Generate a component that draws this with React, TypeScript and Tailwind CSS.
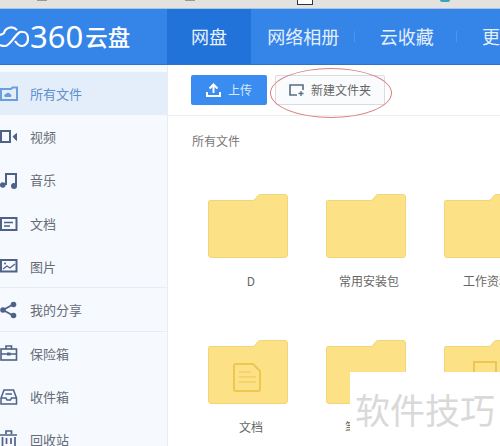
import React from "react";

const font = { fontFamily: '"Noto Sans CJK SC", sans-serif' };

function Icon({ children }: { children: React.ReactNode }) {
  return (
    <svg width="20" height="20" viewBox="0 0 20 20" className="shrink-0 text-[#4e6288]" fill="none" stroke="currentColor" strokeWidth="2">
      {children}
    </svg>
  );
}

const menu = [
  {
    label: "所有文件",
    active: true,
    icon: (
      <>
        <path d="M1 5h10l1.500-1.500H17V16H1z" stroke="#6a9fdc" />
        <path d="M5 13c-1.500-1-.5-3 1-3 1-2 3.500-1.500 4 0 1.500 0 2 2 .8 3z" fill="#6a9fdc" stroke="none" />
      </>
    ),
  },
  {
    label: "视频",
    icon: (
      <>
        <rect x="1" y="4" width="9" height="11" />
        <path d="M13 9.500l3.500-3v7z" fill="currentColor" strokeWidth="1" />
      </>
    ),
  },
  {
    label: "音乐",
    icon: (
      <>
        <path d="M6 15V4h10v12" />
        <circle cx="2.800" cy="15" r="2.800" fill="currentColor" stroke="none" />
        <circle cx="14" cy="16" r="3" fill="currentColor" stroke="none" />
      </>
    ),
  },
  {
    label: "文档",
    icon: (
      <>
        <rect x="1" y="4" width="15.500" height="12" />
        <path d="M4 8.500h9M4 12h6" strokeWidth="1.600" />
      </>
    ),
  },
  {
    label: "图片",
    icon: (
      <>
        <rect x="1" y="4" width="15.500" height="11.500" />
        <path d="M3 13l4-3 3 2 5-4" strokeWidth="1.200" />
        <circle cx="5" cy="7.500" r="1" fill="currentColor" stroke="none" />
      </>
    ),
    divider: true,
  },
  {
    label: "我的分享",
    icon: (
      <>
        <path d="M13 4.500L3 10l10 5.500" strokeWidth="1.800" />
        <circle cx="13.500" cy="4.500" r="2.800" fill="currentColor" stroke="none" />
        <circle cx="3" cy="10" r="2.800" fill="currentColor" stroke="none" />
        <circle cx="13.500" cy="15.500" r="2.800" fill="currentColor" stroke="none" />
      </>
    ),
    divider: true,
  },
  {
    label: "保险箱",
    icon: (
      <>
        <rect x="1" y="6" width="15.500" height="11" strokeWidth="1.600" />
        <path d="M6 6V3h5.500v3M1 11h15.500" strokeWidth="1.600" />
        <path d="M7 11h3.500" strokeWidth="3" />
      </>
    ),
  },
  {
    label: "收件箱",
    icon: (
      <>
        <path d="M1 11l3-8h9.500l3 8v6H1z" strokeWidth="1.500" />
        <path d="M1 11h5l1 2h3.500l1-2h5M5.500 7h6.500" strokeWidth="1.500" />
      </>
    ),
  },
  {
    label: "回收站",
    icon: <path d="M2.500 7v10h12.500V7M0 5h17M6 4V1h5.500v3M6.500 8v6M11 8v6" strokeWidth="1.700" />,
  },
];

function Folder({ label, doc, box }: { label: string; doc?: boolean; box?: boolean }) {
  return (
    <div className="w-[80px] shrink-0 flex flex-col items-center">
      <svg width="80" height="64" viewBox="0 0 80 64" className="shrink-0">
        <path
          d="M2 6.500H44c2 0 3-1 4-2.500l2-2.500C51 .5 52 .5 53 .5H77c1.500 0 2.500 1 2.500 2.500V61c0 1.500-1 2.500-2.500 2.500H3C1.500 63.500 .5 62.500 .5 61V8C.5 7 1 6.500 2 6.500z"
          fill="#fde186"
          stroke="#f0d678"
        />
        {doc && (
          <g fill="none" stroke="#ecc850" strokeWidth="2">
            <path d="M28 24h17l7 7v18a2 2 0 0 1-2 2H28a2 2 0 0 1-2-2V26a2 2 0 0 1 2-2z" />
            <path d="M31 32h12M31 37h17M31 42h17" strokeWidth="1" />
          </g>
        )}
        {box && <rect x="30" y="22" width="22" height="22" fill="none" stroke="#ecc850" strokeWidth="2" />}
      </svg>
      <div className="mt-[14px] ml-[6px] text-[12px] leading-[18px] text-[#666] whitespace-nowrap">{label}</div>
    </div>
  );
}

export default function App() {
  return (
    <div className="relative w-[500px] h-[446px] overflow-hidden bg-white" style={font}>
      <div className="relative h-[9px] bg-[#e4e2df] border-b border-[#a9c4e6]">
        <div className="absolute left-[37px] top-0 w-[10px] h-[1px] bg-[#999]" />
        <div className="absolute left-[185px] top-0 w-[10px] h-[1px] bg-[#999]" />
        <div className="absolute left-[297px] top-0 w-[16px] h-[5px] bg-white border-x border-b border-[#334]" />
        <div className="absolute left-[440px] top-0 w-[10px] h-[2px] rounded-b-full bg-[#3aa6b8]" />
      </div>

      <div className="h-[56px] flex bg-[#3585e8] text-white border-b border-[#2a74d0]">
        <div className="w-[167px] shrink-0 flex items-center">
          <svg width="29" height="26" viewBox="0 0 29 26" fill="none" stroke="#fff" strokeWidth="2.200" className="shrink-0">
            <path d="M0 11c2-1 3-1 4-2 1-5 8-8 13-3" />
            <path d="M0 21c2 1 4 1 5 1 3 0 5-3 9-8s6-7 9-6c3 0 5 3 5 7s-3 7-6 7c-3 0-5-2-7-5" />
          </svg>
          <span className="ml-[1px] text-[31px] leading-none font-normal" style={{ fontFamily: '"Noto Sans", sans-serif' }}>360</span>
          <span className="ml-[2px] text-[22.500px] leading-none font-medium">云盘</span>
        </div>
        <div className="w-[86px] bg-[#2273d9] flex items-center justify-center text-[18px] text-[#e8f1fc]">网盘</div>
        <div className="w-[106px] pl-[1px] flex items-center justify-center text-[18px] text-[#e4effc]">网络相册</div>
        <div className="w-[1px] my-[22px] bg-[#4d95ec]" />
        <div className="w-[103px] pl-[2px] flex items-center justify-center text-[18px] text-[#e4effc]">云收藏</div>
        <div className="w-[1px] my-[22px] bg-[#4d95ec]" />
        <div className="pl-[25px] flex items-center text-[18px] text-[#e4effc]">更</div>
      </div>

      <div className="flex h-[381px]">
        <div className="w-[168px] shrink-0 bg-[#f6f9fd] border-r border-[#e8edf3] pt-[7px]">
          {menu.map((m) => (
            <div
              key={m.label}
              className={`h-[43.300px] flex items-center gap-[10px] text-[13px] ${m.active ? "bg-[#e3eefa] text-[#5d8fd0]" : "text-[#666c78]"} ${m.divider ? "border-b border-[#e8edf3]" : ""}`}
            >
              <Icon>{m.icon}</Icon>
              <span>{m.label}</span>
            </div>
          ))}
        </div>

        <div className="flex-1 min-w-0 overflow-hidden">
          <div className="h-[51px] border-b border-[#ececec] flex items-center pl-[23px] gap-[8px]">
            <div className="w-[76px] h-[30px] rounded-[2px] bg-[#3a8cf0] flex items-center justify-center gap-[7px] text-[12px] text-[#d8e8fc]">
              <svg width="15" height="14" viewBox="0 0 15 14" fill="none" stroke="#fff" strokeWidth="2">
                <path d="M7.500 10V2M3.500 5.500l4-4 4 4" />
                <path d="M1 9v4h13V9" />
              </svg>
              上传
            </div>
            <div className="w-[110px] h-[30px] rounded-[2px] border border-[#d9dde3] bg-[#fafbfd] flex items-center justify-center gap-[7px] text-[12px] text-[#666]">
              <svg width="15" height="14" viewBox="0 0 15 14" fill="none" stroke="#5c6b80" strokeWidth="1.600">
                <path d="M8 12H1V2h13v5" />
                <path d="M12 8v5M9.500 10.500h5" strokeWidth="1.300" />
              </svg>
              新建文件夹
            </div>
          </div>
          <div className="pl-[24px] pt-[16px] text-[12px] leading-[18px] text-[#777]">所有文件</div>
          <div className="pl-[40px] pt-[44px] flex gap-[38px]">
            <Folder label="D" />
            <Folder label="常用安装包" />
            <Folder label="工作资料" />
          </div>
          <div className="pl-[40px] pt-[50px] flex gap-[38px]">
            <Folder label="文档" doc />
            <Folder label="笔记资料" />
            <Folder label="" box />
          </div>
        </div>
      </div>

      {/* red circle drawn over the screenshot */}
      <div className="absolute left-[270px] top-[68px] w-[122px] h-[50px] rounded-[50%] border border-[#d98080]" />

      {/* watermark */}
      <div className="absolute left-[350px] top-[372px] w-[150px] h-[74px] bg-white pl-[5px] pt-[10px] text-[35px] leading-[54px] text-[#d9d9d9] whitespace-nowrap overflow-hidden">
        软件技巧
      </div>
    </div>
  );
}
